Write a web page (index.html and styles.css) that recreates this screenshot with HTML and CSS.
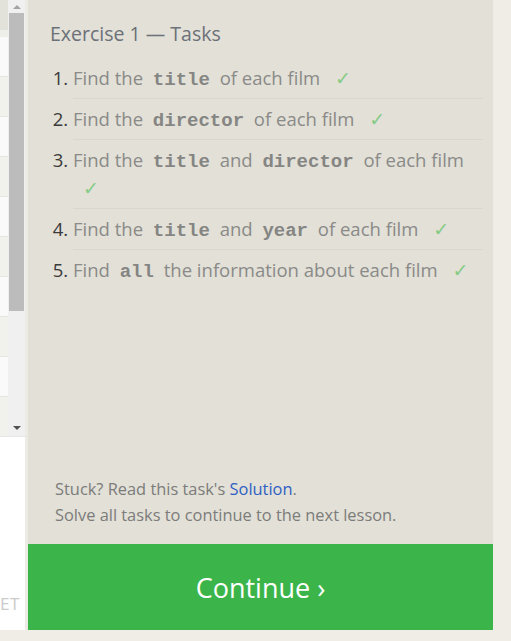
FILE: index.html
```html
<!DOCTYPE html>
<html>
<head>
<meta charset="utf-8">
<link rel="stylesheet" href="styles.css">
</head>
<body>
<div class="app">
  <div class="side">
    <div class="table-area">
      <div class="rows">
        <div class="row head"></div>
        <div class="row"></div>
        <div class="row alt"></div>
        <div class="row"></div>
        <div class="row alt"></div>
        <div class="row"></div>
        <div class="row alt"></div>
        <div class="row"></div>
        <div class="row alt"></div>
        <div class="row"></div>
        <div class="row alt"></div>
      </div>
      <div class="scrollbar">
        <div class="arrow up"></div>
        <div class="track"><div class="thumb"></div></div>
        <div class="arrow down"></div>
      </div>
      <div class="gutter"></div>
    </div>
    <div class="side-bottom"><span class="reset">ET</span></div>
  </div>
  <div class="panel">
    <div class="content">
      <h2 class="title">Exercise 1 — Tasks</h2>
      <ol class="tasks">
        <li><span>Find the <code>title</code> of each film</span> <span class="check">✓</span></li>
        <li><span>Find the <code>director</code> of each film</span> <span class="check">✓</span></li>
        <li><span>Find the <code>title</code> and <code>director</code> of each film</span> <span class="check">✓</span></li>
        <li><span>Find the <code>title</code> and <code>year</code> of each film</span> <span class="check">✓</span></li>
        <li><span>Find <code>all</code> the information about each film</span> <span class="check">✓</span></li>
      </ol>
      <div class="help">
        <p>Stuck? Read this task's <a href="#">Solution</a>.</p>
        <p>Solve all tasks to continue to the next lesson.</p>
      </div>
    </div>
    <div class="continue">Continue ›</div>
  </div>
</div>
</body>
</html>
```
FILE: styles.css
```css
html, body {
  margin: 0;
  padding: 0;
  background: #efede6;
}
body {
  font-family: "Open Sans", "Noto Sans", sans-serif;
}
.app {
  display: flex;
  height: 630px;
  width: 493px;
}
.side {
  width: 28px;
  display: flex;
  flex-direction: column;
  background: #ffffff;
}
.table-area {
  height: 437px;
  display: flex;
  border-bottom: 1px solid #e6e6e6;
  box-sizing: border-box;
}
.rows {
  width: 8px;
  display: flex;
  flex-direction: column;
  overflow: hidden;
}
.row {
  height: 39px;
  flex: none;
  background: #fafafa;
  border-bottom: 1px solid #e4e4e0;
}
.row.alt {
  background: #f2f2ec;
}
.row.head {
  height: 30px;
  background: #e2e2da;
  border-bottom: 7px solid #efefea;
}
.scrollbar {
  width: 17px;
  background: #f0f0f0;
  display: flex;
  flex-direction: column;
}
.arrow {
  height: 13px;
  display: flex;
  align-items: center;
  justify-content: center;
}
.arrow.up::before {
  content: "";
  border-left: 4px solid transparent;
  border-right: 4px solid transparent;
  border-bottom: 4px solid #a3a3a3;
}
.arrow.down {
  height: 17px;
}
.arrow.down::before {
  content: "";
  border-left: 4px solid transparent;
  border-right: 4px solid transparent;
  border-top: 4px solid #505050;
}
.track {
  flex: 1;
  display: flex;
  flex-direction: column;
}
.thumb {
  height: 298px;
  margin: 0 1px;
  background: #bcbcbc;
}
.gutter {
  width: 3px;
  background: #ecebe4;
}
.side-bottom {
  flex: 1;
  display: flex;
  justify-content: flex-start;
  align-items: flex-end;
  padding-bottom: 16px;
  border-right: 3px solid #ecebe4;
}
.reset {
  font-size: 17px;
  color: #cacaca;
  letter-spacing: 0.5px;
  line-height: 20px;
}
.panel {
  width: 465px;
  display: flex;
  flex-direction: column;
  background: #e2e0d7;
}
.content {
  flex: 1;
  display: flex;
  flex-direction: column;
  padding: 20px 10px 0 22px;
}
.title {
  margin: 0;
  font-weight: normal;
  font-size: 19.5px;
  line-height: 28px;
  color: #6c7078;
}
.tasks {
  margin: 10px 0 0 0;
  padding: 0 0 0 23px;
  font-size: 18.5px;
  color: #8a8a88;
}
.tasks li {
  padding: 6px 0 6px 0;
  line-height: 28px;
  border-bottom: 1px solid #d9d7ce;
}
.tasks li:last-child {
  border-bottom: none;
}
.tasks li::marker {
  color: #3a3a3a;
}
.tasks code {
  font-family: "Liberation Mono", "DejaVu Sans Mono", monospace;
  font-weight: bold;
  font-size: 19px;
  line-height: 20px;
  color: #858583;
  padding: 0 5px;
}
.check {
  color: #86cc86;
  margin-left: 10px;
  font-family: "DejaVu Sans", sans-serif;
  font-size: 19px;
  line-height: 20px;
}
.help {
  margin-top: auto;
  padding: 0 0 16px 5px;
  font-size: 16.4px;
  line-height: 26px;
  color: #7c7c7a;
}
.help p {
  margin: 0;
}
.help a {
  color: #2f5fc4;
  text-decoration: none;
}
.continue {
  height: 86px;
  background: #3bb54a;
  color: #ffffff;
  font-size: 27px;
  display: flex;
  align-items: center;
  justify-content: center;
}
```
